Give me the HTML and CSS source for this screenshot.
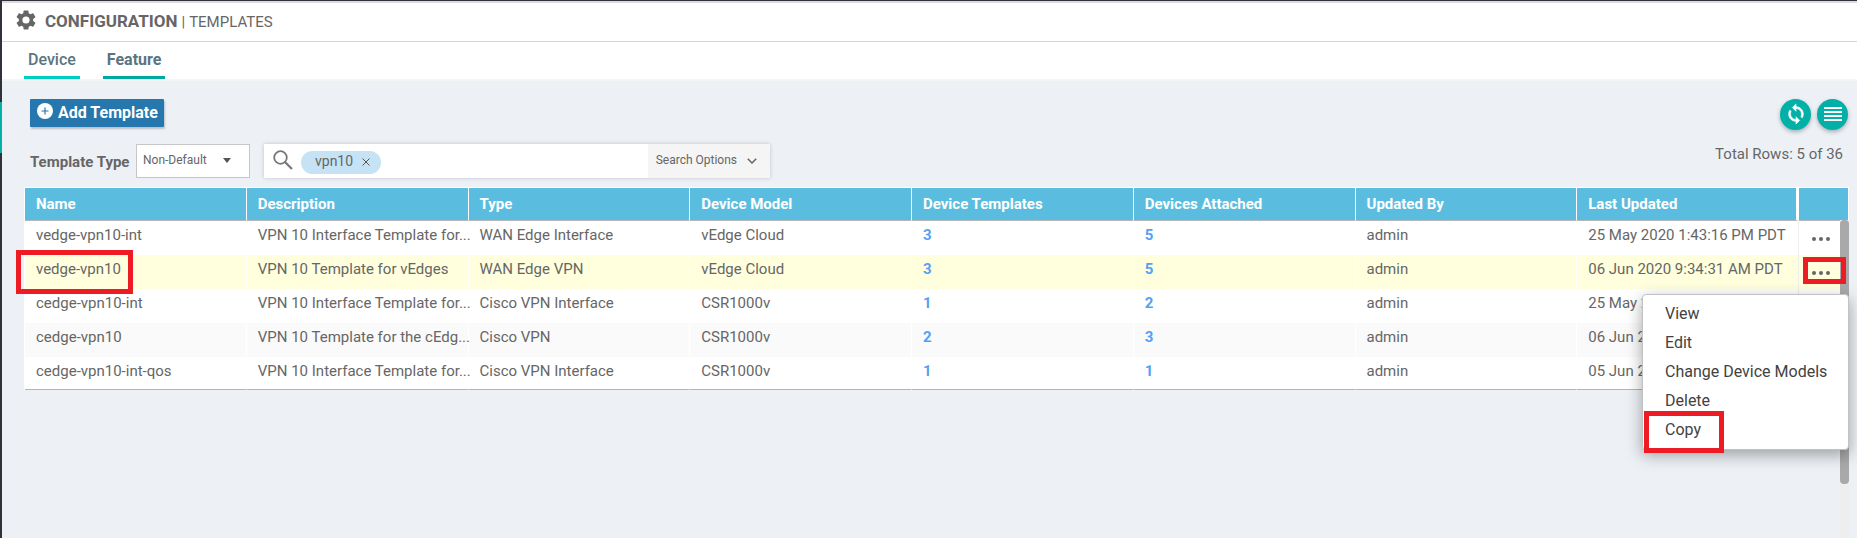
FILE: index.html
```html
<!DOCTYPE html>
<html lang="en">
<head>
<meta charset="utf-8">
<title>Configuration | Templates</title>
<link rel="stylesheet" href="styles.css">
</head>
<body>
<div class="app">
  <aside class="rail"><div class="rail-active"></div></aside>
  <div class="page">
    <header class="title-bar">
      <svg class="gear" viewBox="2 2 20 20" aria-hidden="true"><path d="M19.14 12.94c.04-.3.06-.61.06-.94s-.02-.64-.07-.94l2.03-1.58a.49.49 0 0 0 .12-.61l-1.92-3.32a.49.49 0 0 0-.59-.22l-2.39.96a7 7 0 0 0-1.62-.94l-.36-2.54a.48.48 0 0 0-.48-.41h-3.84a.47.47 0 0 0-.47.41l-.36 2.54a7.2 7.2 0 0 0-1.62.94l-2.39-.96a.48.48 0 0 0-.59.22L2.74 8.87a.48.48 0 0 0 .12.61l2.03 1.58a6 6 0 0 0 0 1.88l-2.03 1.58a.49.49 0 0 0-.12.61l1.92 3.32c.12.22.37.29.59.22l2.39-.96c.5.38 1.03.7 1.62.94l.36 2.54c.05.24.24.41.48.41h3.84c.24 0 .44-.17.47-.41l.36-2.54a7.2 7.2 0 0 0 1.62-.94l2.39.96c.22.08.47 0 .59-.22l1.92-3.32a.47.47 0 0 0-.12-.61zM12 15.6a3.6 3.6 0 1 1 0-7.2 3.6 3.6 0 0 1 0 7.2z"/></svg>
      <h1 class="title"><strong>CONFIGURATION</strong><span class="bar">|</span><span class="section">TEMPLATES</span></h1>
    </header>
    <nav class="tabs">
      <a class="tab" href="#device">Device</a>
      <a class="tab tab-current" href="#feature" aria-current="page">Feature</a>
    </nav>
    <main class="content">
      <div class="toolbar">
        <button class="add" type="button">
          <svg class="add-icon" viewBox="0 0 16 16" aria-hidden="true"><circle cx="8" cy="8" r="8" fill="#fff"/><path d="M8 4.500v7M4.500 8h7" stroke="#2677ae" stroke-width="1.200"/></svg>
          Add Template
        </button>
        <div class="actions">
          <button class="round" type="button" aria-label="Refresh"><svg class="round-icon" viewBox="0 0 24 24"><path d="M12 4V1L8 5l4 4V6c3.310 0 6 2.690 6 6 0 1.010-.25 1.970-.7 2.800l1.460 1.460A7.930 7.930 0 0 0 20 12c0-4.420-3.580-8-8-8zm0 14c-3.310 0-6-2.690-6-6 0-1.010.25-1.970.7-2.800L5.240 7.740A7.930 7.930 0 0 0 4 12c0 4.420 3.580 8 8 8v3l4-4-4-4z" stroke="#fff" stroke-width=".7"/></svg></button>
          <button class="round" type="button" aria-label="Menu"><svg class="round-icon" viewBox="0 0 22 22"><path d="M2 5h18M2 9h18M2 13h18M2 17h18" stroke="#fff" stroke-width="2"/></svg></button>
        </div>
      </div>
      <div class="filters">
        <label class="filter-label" for="type">Template Type</label>
        <div class="select-wrap">
          <select class="select" id="type"><option>Non-Default</option></select>
          <svg class="caret" viewBox="0 0 8 5" aria-hidden="true"><path d="M0 0h8L4 5z"/></svg>
        </div>
        <div class="search">
          <svg class="search-icon" viewBox="0 0 20 20" aria-hidden="true"><circle cx="7.500" cy="7.500" r="6.300" fill="none" stroke="#777" stroke-width="1.800"/><path d="M12 12l7 7" stroke="#777" stroke-width="2.200"/></svg>
          <span class="chip">vpn10<button class="chip-x" type="button" aria-label="Remove vpn10"><svg viewBox="0 0 8 8"><path d="M.5.5l7 7M7.500.5l-7 7" stroke="#555" stroke-width="1"/></svg></button></span>
          <input class="search-input" type="text" aria-label="Search">
          <button class="options" type="button">Search Options<svg class="chevron" viewBox="0 0 10 6" aria-hidden="true"><path d="M.8.8L5 5 9.200.8" fill="none" stroke="#666" stroke-width="1.500"/></svg></button>
        </div>
        <div class="total">Total Rows: 5 of 36</div>
      </div>
      <div class="grid">
        <table class="table">
          <colgroup><col><col><col><col><col><col><col><col><col class="col-menu"></colgroup>
          <thead>
            <tr><th>Name</th><th>Description</th><th>Type</th><th>Device Model</th><th>Device Templates</th><th>Devices Attached</th><th>Updated By</th><th>Last Updated</th><th aria-label="Actions"></th></tr>
          </thead>
          <tbody>
            <tr><td>vedge-vpn10-int</td><td>VPN 10 Interface Template for...</td><td>WAN Edge Interface</td><td>vEdge Cloud</td><td><a href="#t">3</a></td><td><a href="#d">5</a></td><td>admin</td><td>25 May 2020 1:43:16 PM PDT</td><td class="menu-cell"><button class="more" type="button" aria-label="More actions"><svg viewBox="0 0 18 4"><circle cx="2" cy="2" r="2"/><circle cx="9" cy="2" r="2"/><circle cx="16" cy="2" r="2"/></svg></button></td></tr>
            <tr class="selected"><td class="marked">vedge-vpn10<span class="mark mark-name"></span></td><td>VPN 10 Template for vEdges</td><td>WAN Edge VPN</td><td>vEdge Cloud</td><td><a href="#t">3</a></td><td><a href="#d">5</a></td><td>admin</td><td>06 Jun 2020 9:34:31 AM PDT</td><td class="menu-cell marked"><button class="more" type="button" aria-label="More actions"><svg viewBox="0 0 18 4"><circle cx="2" cy="2" r="2"/><circle cx="9" cy="2" r="2"/><circle cx="16" cy="2" r="2"/></svg></button><span class="mark mark-more"></span>
              <div class="menu">
                <button class="item" type="button">View</button>
                <button class="item" type="button">Edit</button>
                <button class="item" type="button">Change Device Models</button>
                <button class="item" type="button">Delete</button>
                <button class="item" type="button">Copy<span class="mark mark-copy"></span></button>
              </div></td></tr>
            <tr><td>cedge-vpn10-int</td><td>VPN 10 Interface Template for...</td><td>Cisco VPN Interface</td><td>CSR1000v</td><td><a href="#t">1</a></td><td><a href="#d">2</a></td><td>admin</td><td>25 May 2</td><td></td></tr>
            <tr class="alt"><td>cedge-vpn10</td><td>VPN 10 Template for the cEdg...</td><td>Cisco VPN</td><td>CSR1000v</td><td><a href="#t">2</a></td><td><a href="#d">3</a></td><td>admin</td><td>06 Jun 2</td><td></td></tr>
            <tr><td>cedge-vpn10-int-qos</td><td>VPN 10 Interface Template for...</td><td>Cisco VPN Interface</td><td>CSR1000v</td><td><a href="#t">1</a></td><td><a href="#d">1</a></td><td>admin</td><td>05 Jun 2</td><td></td></tr>
          </tbody>
        </table>
        <div class="scroll-track"><div class="scroll-thumb"></div></div>
      </div>
    </main>
  </div>
</div>
</body>
</html>
```
FILE: styles.css
```css
* { box-sizing: border-box; }
body { margin: 0; font-family: Roboto, "Liberation Sans", sans-serif; font-size: 15px; color: #666; background: #edf1f6; }
button, input, select { font: inherit; color: inherit; border: 0; margin: 0; padding: 0; background: none; }
svg { display: block; }
.app { display: flex; min-height: 100vh; }
.rail { width: 2px; background: #32313a; padding-top: 102px; flex: none; }
.rail-active { height: 51px; background: #03b0a8; }
.page { flex: 1; min-width: 0; display: flex; flex-direction: column; border-top: 1px solid #32313a; }
.title-bar { display: flex; align-items: center; height: 41px; padding: 0 14px 1px; background: #fff; border-top: 2px solid #dcdbe0; border-bottom: 1px solid #d5d5d5; }
.gear { width: 20px; height: 20px; fill: #666; margin: 0 9px 3px 0; }
.title { display: flex; align-items: baseline; margin: 0; font-size: 15px; font-weight: 400; line-height: 20px; }
.title strong { font-size: 17px; font-weight: 700; }
.bar { margin: 0 4px; }
.tabs { display: flex; gap: 23px; height: 39px; padding: 0 22px; background: #fff; border-bottom: 2px solid #f5f5f5; }
.tab { padding: 8px 4px 0; border-bottom: 3px solid #00cdc1; color: #5a7480; text-decoration: none; font-weight: 500; font-size: 16px; line-height: 20px; }
.tab-current { border-color: #00a8a0; font-weight: 700; }
.content { flex: 1; display: flex; flex-direction: column; padding: 18px 0 0 22px; }
.toolbar { display: flex; justify-content: space-between; align-items: flex-start; padding: 0 9px 0 6px; }
.add { display: flex; align-items: center; gap: 5px; height: 28px; padding: 0 6px 2px 7px; border-radius: 1px; background: #2677ae; color: #fff; font-weight: 700; font-size: 16px; box-shadow: 1px 2px 2px #bcc0c6; }
.add-icon { width: 16px; height: 16px; margin-bottom: 2px; }
.actions { display: flex; gap: 6px; }
.round { width: 31px; height: 31px; border-radius: 50%; background: #03b0a8; display: flex; align-items: center; justify-content: center; padding-bottom: 2px; box-shadow: 0 2px 4px #a9adb3; }
.round-icon { width: 22px; height: 22px; fill: #fff; }
.filters { display: flex; align-items: flex-start; padding: 14px 14px 0 6px; }
.filter-label { width: 106px; padding-top: 8px; font-weight: 700; line-height: 20px; }
.select-wrap { position: relative; width: 114px; margin-right: 14px; }
.select { appearance: none; width: 100%; height: 34px; padding: 0 6px 2px; border: 1px solid #c6c6c6; background: #fff; font-size: 12px; }
.caret { position: absolute; right: 19px; top: 14px; width: 8px; height: 5px; fill: #555; pointer-events: none; }
.search { display: flex; align-items: center; width: 506px; height: 34px; background: #fff; box-shadow: 0 0 4px #bfc3c8; }
.search-icon { width: 20px; height: 20px; margin: 0 8px 2px 9px; }
.chip { display: flex; align-items: center; gap: 9px; height: 23px; padding: 0 11px 2px 14px; margin-top: 2px; border-radius: 12px; background: #c5e3f5; font-size: 14px; }
.chip-x { width: 8px; height: 8px; margin-top: 2px; }
.search-input { flex: 1; min-width: 0; height: 34px; outline: 0; }
.options { display: flex; align-items: center; gap: 10px; height: 34px; padding: 0 13px 2px 8px; background: #f5f5f5; font-size: 12px; }
.chevron { width: 10px; height: 6px; margin-top: 2px; }
.total { margin-left: auto; line-height: 20px; }
.grid { position: relative; flex: 1; margin-top: 9px; padding-right: 8px; }
.table { width: 100%; table-layout: fixed; border-collapse: separate; border-spacing: 0; border-left: 1px solid #fff; }
.col-menu { width: 50px; }
th { height: 34px; padding: 0 0 0 11px; background: #5abddf; color: #fff; text-align: left; font-weight: 700; line-height: 20px; border-top: 1px solid #fff; border-bottom: 1px solid #b4b8bb; border-right: 1px solid #fff; white-space: nowrap; }
th:nth-last-child(2) { border-right: 3px solid #fff; }
td { height: 34px; padding: 4px 0 10px 11px; line-height: 20px; background: #fff; border-right: 1px solid #fff; white-space: nowrap; }
td:nth-last-child(2) { border-right-color: #eee; }
td a { color: #559ff5; font-weight: 700; text-decoration: none; }
.selected td { background: #ffffde; }
.alt td { background: #fafafa; }
tbody tr:last-child td { border-bottom: 1px solid #b4b4b4; height: 33px; padding-bottom: 8px; }
.marked { position: relative; }
td.menu-cell { padding: 0 0 0 13px; }
.more { display: block; padding: 2px 0 0; }
.more svg { width: 18px; height: 4px; fill: #666; }
.mark { position: absolute; border: 5px solid #ed1c24; pointer-events: none; }
.mark-name { left: -9px; top: -5px; width: 117px; height: 44px; }
.mark-more { right: 2px; top: 2px; width: 43px; height: 27px; z-index: 3; }
.menu { position: absolute; z-index: 2; right: -1px; top: 39px; width: 207px; padding: 5px 0 4px; border: 1px solid #c2c2c2; border-radius: 4px; background: #fff; box-shadow: 0 5px 16px rgba(0, 0, 0, .35); }
.item { position: relative; display: block; width: 100%; height: 29px; padding: 0 0 1px 22px; text-align: left; font-size: 16px; color: #424242; }
.mark-copy { left: 1px; top: -5px; width: 80px; height: 42px; }
.scroll-track { position: absolute; right: 8px; top: 33px; bottom: 0; width: 9px; background: #eee; }
.scroll-thumb { height: 264px; border-radius: 4px; background: #a9a9a9; }
```
